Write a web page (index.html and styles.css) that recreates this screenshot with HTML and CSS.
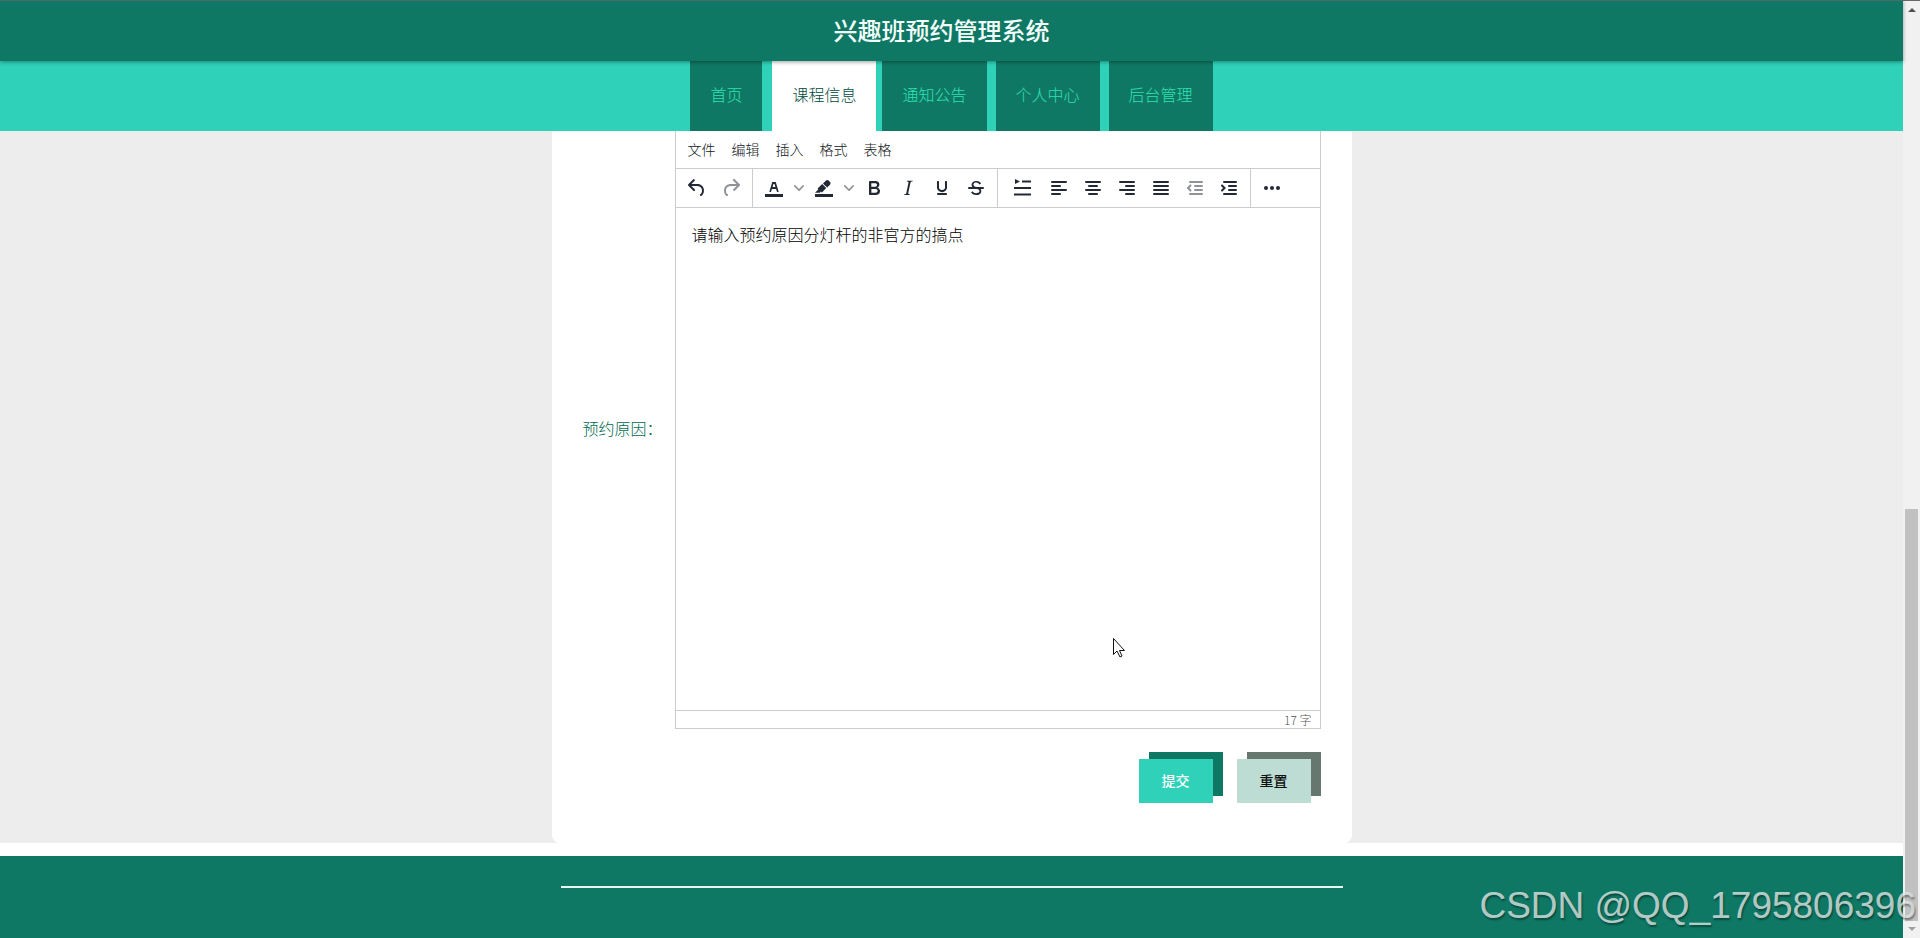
FILE: index.html
```html
<!DOCTYPE html>
<html lang="zh-CN">
<head>
<meta charset="utf-8">
<title>兴趣班预约管理系统</title>
<link rel="stylesheet" href="styles.css">
</head>
<body>
<div class="page">
  <header class="header"><h1 class="title">兴趣班预约管理系统</h1></header>
  <nav class="nav">
    <a class="tab" href="#">首页</a>
    <a class="tab active" href="#">课程信息</a>
    <a class="tab" href="#">通知公告</a>
    <a class="tab" href="#">个人中心</a>
    <a class="tab" href="#">后台管理</a>
  </nav>
  <main class="main">
    <form class="card">
      <div class="field">
        <label class="label" for="reason">预约原因：</label>
        <div class="editor">
          <div class="menubar">
            <button type="button" class="menu">文件</button>
            <button type="button" class="menu">编辑</button>
            <button type="button" class="menu">插入</button>
            <button type="button" class="menu">格式</button>
            <button type="button" class="menu">表格</button>
          </div>
          <div class="toolbar">
            <div class="group">
              <button type="button" class="tool" aria-label="撤销"><svg class="icon" viewBox="0 0 24 24"><path d="M6.4 8H12c3.7 0 6.2 2 6.8 5.1.6 2.7-.4 5.6-2.3 6.8a1 1 0 0 1-1-1.8c1.1-.6 1.8-2.7 1.4-4.6-.5-2.1-2.1-3.5-4.9-3.5H6.4l3.3 3.3a1 1 0 1 1-1.4 1.4l-5-5a1 1 0 0 1 0-1.4l5-5a1 1 0 0 1 1.4 1.4L6.4 8z"/></svg></button>
              <button type="button" class="tool" aria-label="重做" disabled><svg class="icon" viewBox="0 0 24 24"><path d="M17.6 10H12c-2.8 0-4.4 1.4-4.9 3.5-.4 2 .3 4 1.4 4.6a1 1 0 1 1-1 1.8c-2-1.2-2.9-4.1-2.3-6.8.6-3 3-5.1 6.8-5.1h5.6l-3.3-3.3a1 1 0 1 1 1.4-1.4l5 5a1 1 0 0 1 0 1.4l-5 5a1 1 0 0 1-1.4-1.4l3.3-3.3z"/></svg></button>
            </div>
            <div class="group">
              <button type="button" class="tool" aria-label="文字颜色"><svg class="icon" viewBox="0 0 24 24"><path d="M3 18h18v3H3zM8.7 16h-.8a.5.5 0 0 1-.5-.6l2.7-9c.1-.3.3-.4.5-.4h2.8c.2 0 .4.1.5.4l2.7 9a.5.5 0 0 1-.5.6h-.8a.5.5 0 0 1-.4-.4l-.7-2.2c0-.3-.3-.4-.5-.4h-3.4c-.2 0-.4.1-.5.4l-.7 2.2c0 .3-.2.4-.4.4zm2.6-7.6-.6 2a.5.5 0 0 0 .5.6h1.6a.5.5 0 0 0 .5-.6l-.6-2c0-.3-.3-.4-.5-.4h-.4c-.2 0-.4.1-.5.4z"/></svg></button>
              <button type="button" class="chevron" aria-label="选择文字颜色"><svg class="icon-small" viewBox="0 0 10 10"><path d="M8.7 2.2c.3-.3.8-.3 1 0 .4.4.4.9 0 1.2L5.7 7.8c-.3.3-.9.3-1.2 0L.2 3.4a.8.8 0 0 1 0-1.2c.3-.3.8-.3 1.1 0L5 6l3.7-3.8z"/></svg></button>
              <button type="button" class="tool" aria-label="背景颜色"><svg class="icon" viewBox="0 0 24 24"><path d="M3 18h18v3H3zM7.7 16.7H3l3.3-3.3-.7-.8L10.2 8l4 4.1-4 4.2c-.2.2-.6.2-.8 0l-.6-.7-1.1 1.1zm5-7.5L11 7.4l3-2.9a2 2 0 0 1 2.6 0L18 6c.7.7.7 2 0 2.7l-2.9 2.9-1.8-1.8-.6-.6z"/></svg></button>
              <button type="button" class="chevron" aria-label="选择背景颜色"><svg class="icon-small" viewBox="0 0 10 10"><path d="M8.7 2.2c.3-.3.8-.3 1 0 .4.4.4.9 0 1.2L5.7 7.8c-.3.3-.9.3-1.2 0L.2 3.4a.8.8 0 0 1 0-1.2c.3-.3.8-.3 1.1 0L5 6l3.7-3.8z"/></svg></button>
              <button type="button" class="tool" aria-label="粗体"><svg class="icon" viewBox="0 0 24 24"><path d="M7.8 19c-.3 0-.5 0-.6-.2l-.2-.5V5.7c0-.2 0-.4.2-.5l.6-.2h5c1.5 0 2.7.3 3.5 1 .7.6 1.1 1.4 1.1 2.5a3 3 0 0 1-.6 1.9c-.4.6-1 1-1.6 1.2.4.1.9.3 1.3.6s.8.7 1 1.2c.4.4.5 1 .5 1.6 0 1.3-.4 2.3-1.3 3-.8.7-2.1 1-3.8 1H7.8zm5-8.3c.6 0 1.2-.1 1.6-.5.4-.3.6-.7.6-1.3 0-1.1-.8-1.7-2.3-1.7H9.3v3.5h3.4zm.5 6c.7 0 1.3-.1 1.7-.4.4-.4.6-.9.6-1.5s-.2-1-.7-1.4c-.4-.3-1-.4-2-.4H9.4v3.8h4z"/></svg></button>
              <button type="button" class="tool" aria-label="斜体"><svg class="icon" viewBox="0 0 24 24"><path d="m16.7 4.7-.1.9h-.3c-.6 0-1 0-1.4.3-.3.3-.4.6-.5 1.1l-2.1 9.8v.6c0 .5.4.8 1.4.8h.2l-.2.8H8l.2-.8h.2c1.1 0 1.8-.5 2-1.5l2-9.8.1-.5c0-.6-.4-.8-1.4-.8h-.3l.2-.9h5.7z"/></svg></button>
              <button type="button" class="tool" aria-label="下划线"><svg class="icon" viewBox="0 0 24 24"><path d="M16 5c.6 0 1 .4 1 1v5.5a4 4 0 0 1-.4 1.8l-1 1.4a5.3 5.3 0 0 1-5.5 1 5 5 0 0 1-1.6-1c-.5-.4-.8-.9-1.1-1.4a4 4 0 0 1-.4-1.8V6c0-.6.4-1 1-1s1 .4 1 1v5.5c0 .3 0 .6.2 1l.6.7a3.3 3.3 0 0 0 2.2.8 3.4 3.4 0 0 0 2.2-.8c.3-.2.4-.5.6-.8l.2-.9V6c0-.6.4-1 1-1zM8 17h8c.6 0 1 .4 1 1s-.4 1-1 1H8a1 1 0 0 1 0-2z"/></svg></button>
              <button type="button" class="tool" aria-label="删除线"><svg class="icon" viewBox="0 0 24 24"><path d="M15.6 8.5c-.5-.7-1-1.1-1.3-1.3-.6-.4-1.3-.6-2-.6-2.7 0-2.8 1.7-2.8 2.1 0 1.6 1.8 2 3.2 2.3 4.4.9 4.6 2.8 4.6 3.9 0 1.4-.7 4.1-5 4.1A6.2 6.2 0 0 1 7 16.4l1.5-1.1c.4.6 1.6 2 3.7 2 1.6 0 2.5-.4 3-1.2.4-.8.3-2-.8-2.6-.7-.4-1.6-.7-2.9-1-1-.2-3.9-.8-3.9-3.6C7.6 6 10.3 5 12.4 5c2.9 0 4.2 1.6 4.7 2.4l-1.5 1.1z"/><path d="M5 11h14a1 1 0 0 1 0 2H5a1 1 0 0 1 0-2z"/></svg></button>
            </div>
            <div class="group">
              <button type="button" class="tool tool-wide" aria-label="首行缩进"><svg class="icon" viewBox="0 0 24 24"><path d="m5 3 5 2.500-5 2.500zM12 4.500h9v2h-9zM4 11h17v2H4zM4 17.500h17v2H4z"/></svg></button>
              <button type="button" class="tool" aria-label="左对齐"><svg class="icon" viewBox="0 0 24 24"><path class="line" d="M5 6h14M5 10h8M5 14h14M5 18h8"/></svg></button>
              <button type="button" class="tool" aria-label="居中对齐"><svg class="icon" viewBox="0 0 24 24"><path class="line" d="M5 6h14M8 10h8M5 14h14M8 18h8"/></svg></button>
              <button type="button" class="tool" aria-label="右对齐"><svg class="icon" viewBox="0 0 24 24"><path class="line" d="M5 6h14M11 10h8M5 14h14M11 18h8"/></svg></button>
              <button type="button" class="tool" aria-label="两端对齐"><svg class="icon" viewBox="0 0 24 24"><path class="line" d="M5 6h14M5 10h14M5 14h14M5 18h14"/></svg></button>
              <button type="button" class="tool" aria-label="减少缩进" disabled><svg class="icon" viewBox="0 0 24 24"><path class="line" d="M7 6h12M12 10h7M12 14h7M7 18h12M7.500 9.500 5 12l2.500 2.500"/></svg></button>
              <button type="button" class="tool" aria-label="增加缩进"><svg class="icon" viewBox="0 0 24 24"><path class="line" d="M7 6h12M12 10h7M12 14h7M7 18h12M5 9.500 7.500 12 5 14.500"/></svg></button>
            </div>
            <div class="group">
              <button type="button" class="tool" aria-label="更多"><svg class="icon" viewBox="0 0 24 24"><circle cx="6" cy="12" r="2"/><circle cx="12" cy="12" r="2"/><circle cx="18" cy="12" r="2"/></svg></button>
            </div>
          </div>
          <textarea class="content" id="reason" spellcheck="false">请输入预约原因分灯杆的非官方的搞点</textarea>
          <div class="status">17 字</div>
        </div>
      </div>
      <div class="actions">
        <button type="button" class="btn submit">提交</button>
        <button type="reset" class="btn reset">重置</button>
      </div>
    </form>
  </main>
  <footer class="footer"><hr class="rule"></footer>
</div>
<div class="scrollbar">
  <svg class="arrow" viewBox="0 0 17 17"><path fill="#505050" d="M5 11h8L9 7z"/></svg>
  <div class="thumb"></div>
  <svg class="arrow" viewBox="0 0 17 17"><path fill="#a0a0a0" d="M5 6h8l-4 4z"/></svg>
</div>
<svg class="cursor" viewBox="0 0 13 20"><path fill="#fff" stroke="#111" d="M.5.500v16l3.500-3.500 3 6 2-1-2.500-5.500h5z"/></svg>
<div class="watermark">CSDN @QQ_1795806396</div>
</body>
</html>
```
FILE: styles.css
```css
* { box-sizing: border-box; }
body {
  margin: 0;
  min-height: 100vh;
  display: flex;
  background: #fff;
  font-family: "Noto Sans CJK SC", sans-serif;
  font-size: 16px;
  font-weight: 300;
}
button { border: 0; padding: 0; background: none; font: inherit; color: inherit; }
.page { flex: 1; min-width: 0; display: flex; flex-direction: column; }
.header {
  position: relative;
  z-index: 1;
  padding: 11px 20px 14px 0;
  border-top: 1px solid #4a6c68;
  background: #0f7864;
  box-shadow: 0 1px 4px rgba(0, 0, 0, .4);
  text-align: center;
}
.title { margin: 0; font-size: 24px; line-height: 35px; font-weight: 500; color: #f4fffc; }
.nav { display: flex; justify-content: center; gap: 9px; background: #2fd2b8; }
.tab {
  padding: 0 20px 4px;
  line-height: 66px;
  background: #0f7864;
  color: #2fe0b4;
  text-decoration: none;
}
.tab.active { margin: 0 -3px 0 1px; background: #fff; color: #004a3c; }
.main { flex: 1; display: flex; justify-content: center; background: #ededed; }
.card {
  width: 800px;
  display: flex;
  flex-direction: column;
  padding: 0 31px 40px;
  border-radius: 0 0 8px 8px;
  background: #fff;
}
.field { flex: 1; display: flex; align-items: center; gap: 12px; }
.label { width: 80px; padding-bottom: 4px; color: #006850; }
.editor {
  flex: 1;
  align-self: stretch;
  display: flex;
  flex-direction: column;
  border: 1px solid #ccc;
  border-top: 0;
}
.menubar { display: flex; gap: 16px; padding: 8px 12px; font-size: 14px; line-height: 21px; color: #111822; }
.toolbar { display: flex; border: solid #ccc; border-width: 1px 0; color: #222834; }
.group { display: flex; align-items: center; padding: 0 4px; height: 38px; border-right: 1px solid #ccc; }
.group:last-child { border-right: 0; }
.tool { width: 34px; height: 34px; display: flex; align-items: center; justify-content: center; }
.tool-wide { width: 40px; }
.tool:disabled { opacity: .5; }
.chevron { width: 16px; height: 34px; display: flex; align-items: center; justify-content: center; opacity: .5; }
.icon { width: 24px; height: 24px; fill: currentColor; }
.icon-small { width: 10px; height: 10px; fill: currentColor; }
.line { fill: none; stroke: currentColor; stroke-width: 2; stroke-linecap: round; }
.content {
  flex: 1;
  width: 100%;
  padding: 14px 16px;
  border: 0;
  outline: 0;
  resize: none;
  font: inherit;
  line-height: 24px;
  color: #000;
}
.status { padding: 0 8px; border-top: 1px solid #ccc; font-size: 12px; line-height: 17px; text-align: right; color: #555; }
.actions { display: flex; justify-content: flex-end; gap: 24px; padding: 30px 10px 0 0; }
.btn { width: 74px; height: 44px; padding-bottom: 2px; font-size: 14px; font-weight: 500; }
.submit { background: #2fd2b8; color: #fff; box-shadow: 10px -7px #0f7864; }
.reset { background: #bcdcd4; color: #111; box-shadow: 10px -7px #66776f; }
.footer { margin-top: 13px; padding: 30px 16px 50px; background: #0f7864; }
.rule { max-width: 782px; height: 2px; margin: 0 auto; border: 0; background: #e8f6f2; }
.scrollbar { width: 17px; display: flex; flex-direction: column; align-items: center; border-top: 1px solid #666; background: #f1f1f1; }
.arrow { width: 17px; height: 17px; }
.thumb { width: 13px; height: 44%; margin-top: auto; background: #c1c1c1; }
.cursor { position: absolute; left: 1113px; top: 638px; width: 13px; height: 20px; }
.watermark {
  position: absolute;
  right: 4px;
  bottom: 10px;
  font-family: "Liberation Sans", sans-serif;
  font-size: 37px;
  line-height: 44px;
  color: rgba(225, 232, 230, .8);
  text-shadow: 1px 2px 2px rgba(0, 0, 0, .4);
}
```
